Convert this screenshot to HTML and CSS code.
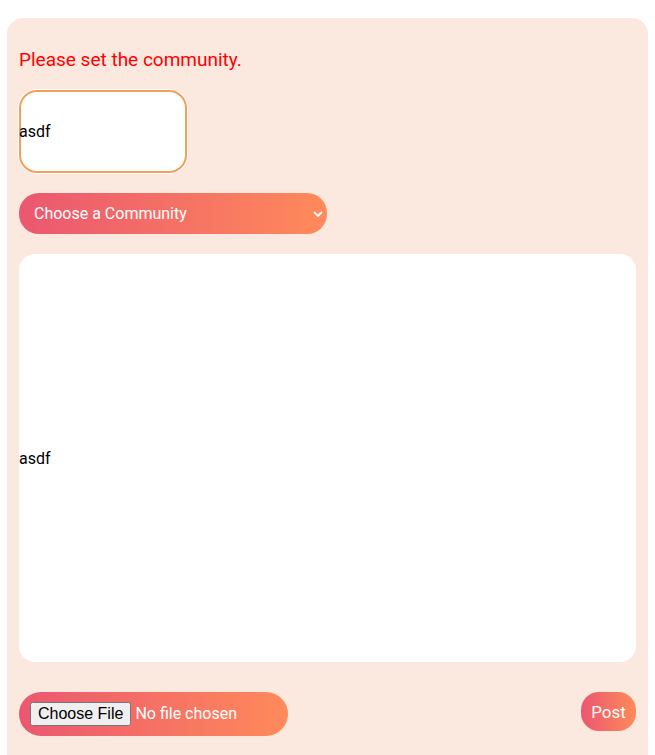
FILE: index.html
```html
<!DOCTYPE html>
<html>
<head>
<meta charset="utf-8">
<link rel="stylesheet" href="styles.css">
</head>
<body>
<div class="page">
  <form class="card">
    <p class="error">Please set the community.</p>
    <div class="title-box"><span class="title-text">asdf</span></div>
    <select class="community">
      <option>Choose a Community</option>
    </select>
    <div class="body-box">asdf</div>
    <div class="actions">
      <div class="file-wrap"><input type="file" class="file"></div>
      <button type="button" class="post">Post</button>
    </div>
  </form>
</div>
</body>
</html>
```
FILE: styles.css
```css
html, body { margin: 0; padding: 0; background: #fff; }
body { font-family: Roboto, "Liberation Sans", sans-serif; }
.page { padding: 18px 7px 0 7px; }
.card {
  background: #fbe9df;
  border-radius: 16px 16px 0 0;
  padding: 30px 12px 40px 12px;
  display: flex;
  flex-direction: column;
  align-items: flex-start;
}
.error {
  color: #ff0000;
  font-size: 19px;
  margin: 0 0 18px 0;
  line-height: 24px;
}
.title-box {
  box-sizing: border-box;
  width: 168px;
  height: 83px;
  background: #fff;
  border: 2px solid #f3a05a;
  box-shadow: 0 0 0 1px #fff;
  border-radius: 18px;
  display: flex;
  align-items: center;
  font-size: 16px;
  color: #000;
  margin-bottom: 20px;
}
.title-text { margin-left: -2px; }
.community {
  -webkit-appearance: none;
  appearance: none;
  width: 308px;
  height: 41px;
  border: none;
  border-radius: 20px;
  color: #fff;
  font-family: Roboto, "Liberation Sans", sans-serif;
  font-size: 16px;
  padding: 0 15px;
  margin-bottom: 20px;
  background-image:
    url("data:image/svg+xml;utf8,<svg xmlns='http://www.w3.org/2000/svg' width='10' height='6' viewBox='0 0 10 6'><path d='M1 1l4 4 4-4' fill='none' stroke='white' stroke-width='1.8'/></svg>"),
    linear-gradient(90deg, #eb5770, #ff8a5a);
  background-repeat: no-repeat, no-repeat;
  background-position: right 4px center, 0 0;
}
.body-box {
  box-sizing: border-box;
  width: 617px;
  height: 408px;
  background: #fff;
  border-radius: 16px;
  display: flex;
  align-items: center;
  font-size: 16px;
  color: #000;
  margin-bottom: 30px;
}
.actions {
  width: 617px;
  display: flex;
  justify-content: space-between;
  align-items: flex-start;
}
.file-wrap {
  box-sizing: border-box;
  width: 269px;
  height: 44px;
  border-radius: 22px;
  background: linear-gradient(90deg, #eb5770, #ff8a5a);
  display: flex;
  align-items: center;
  padding-left: 11px;
}
.file {
  color: #fff;
  font-family: Roboto, "Liberation Sans", sans-serif;
  font-size: 16px;
}
.file::file-selector-button {
  font-family: "Liberation Sans", Arial, sans-serif;
  font-size: 16px;
}
.post {
  height: 39px;
  width: 55px;
  border: none;
  border-radius: 18px;
  background: linear-gradient(90deg, #eb5770, #ff8a5a);
  color: #fff;
  font-family: Roboto, "Liberation Sans", sans-serif;
  font-size: 17px;
  font-weight: 400;
  padding: 0;
}
```
